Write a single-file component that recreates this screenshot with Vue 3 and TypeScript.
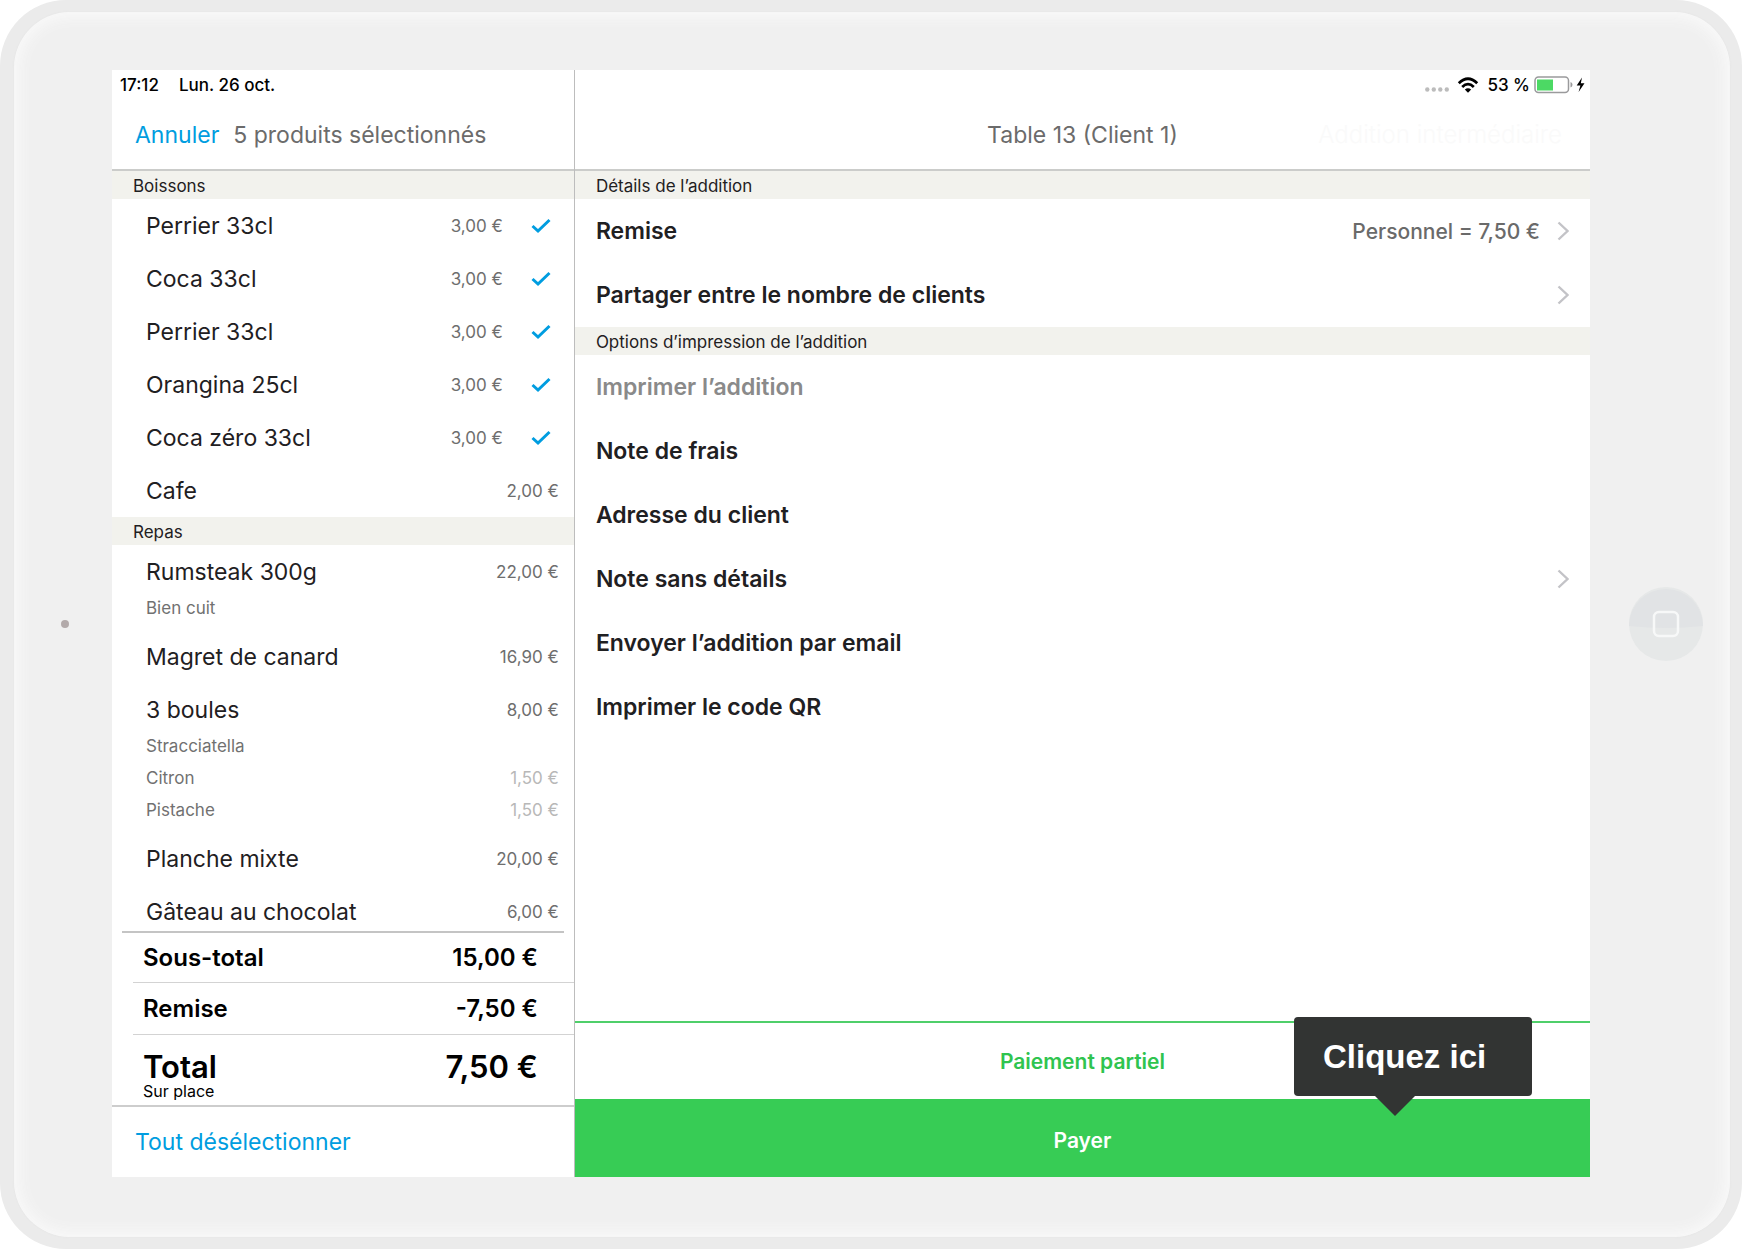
<script setup lang="ts">
import { ref } from 'vue'

interface Extra { name: string; price?: string }
interface Product { name: string; price: string; selected?: boolean; extras?: Extra[] }
interface Category { title: string; products: Product[] }
interface Action { label: string; value?: string; chevron?: boolean; disabled?: boolean }
interface ActionGroup { title: string; actions: Action[] }

const categories = ref<Category[]>([
  {
    title: 'Boissons',
    products: [
      { name: 'Perrier 33cl', price: '3,00 €', selected: true },
      { name: 'Coca 33cl', price: '3,00 €', selected: true },
      { name: 'Perrier 33cl', price: '3,00 €', selected: true },
      { name: 'Orangina 25cl', price: '3,00 €', selected: true },
      { name: 'Coca zéro 33cl', price: '3,00 €', selected: true },
      { name: 'Cafe', price: '2,00 €' },
    ],
  },
  {
    title: 'Repas',
    products: [
      { name: 'Rumsteak 300g', price: '22,00 €', extras: [{ name: 'Bien cuit' }] },
      { name: 'Magret de canard', price: '16,90 €' },
      {
        name: '3 boules',
        price: '8,00 €',
        extras: [
          { name: 'Stracciatella' },
          { name: 'Citron', price: '1,50 €' },
          { name: 'Pistache', price: '1,50 €' },
        ],
      },
      { name: 'Planche mixte', price: '20,00 €' },
      { name: 'Gâteau au chocolat', price: '6,00 €' },
    ],
  },
])

const groups: ActionGroup[] = [
  {
    title: 'Détails de l’addition',
    actions: [
      { label: 'Remise', value: 'Personnel = 7,50 €', chevron: true },
      { label: 'Partager entre le nombre de clients', chevron: true },
    ],
  },
  {
    title: 'Options d’impression de l’addition',
    actions: [
      { label: 'Imprimer l’addition', disabled: true },
      { label: 'Note de frais' },
      { label: 'Adresse du client' },
      { label: 'Note sans détails', chevron: true },
      { label: 'Envoyer l’addition par email' },
      { label: 'Imprimer le code QR' },
    ],
  },
]

function toggle(product: Product) {
  product.selected = !product.selected
}
</script>

<template>
  <div class="device">
    <div class="bezel">
      <div class="side side-left"><span class="camera"></span></div>

      <main class="screen">
        <section class="order">
          <header class="bar">
            <div class="status">
              <span>17:12</span>
              <span>Lun. 26 oct.</span>
            </div>
            <div class="nav nav-order">
              <button type="button" class="link">Annuler</button>
              <span>5 produits sélectionnés</span>
            </div>
          </header>

          <div class="products">
            <template v-for="category in categories" :key="category.title">
              <h2 class="section">{{ category.title }}</h2>
              <ul>
                <li v-for="(product, i) in category.products" :key="i">
                  <button type="button" class="product" :aria-pressed="!!product.selected" @click="toggle(product)">
                    <span class="name">{{ product.name }}</span>
                    <span class="price">{{ product.price }}</span>
                    <svg v-if="product.selected" class="check" viewBox="0 0 20 16" aria-hidden="true">
                      <path d="M1.500 8 L7 13 L18.500 2" />
                    </svg>
                  </button>
                  <ul v-if="product.extras" class="extras">
                    <li v-for="extra in product.extras" :key="extra.name" class="extra">
                      <span>{{ extra.name }}</span>
                      <span class="extra-price">{{ extra.price }}</span>
                    </li>
                  </ul>
                </li>
              </ul>
            </template>
          </div>

          <dl class="totals">
            <div class="sum"><dt>Sous-total</dt><dd>15,00 €</dd></div>
            <div class="sum discount"><dt>Remise</dt><dd>-7,50 €</dd></div>
            <div class="sum total">
              <dt>Total<small>Sur place</small></dt>
              <dd>7,50 €</dd>
            </div>
          </dl>

          <footer class="deselect">
            <button type="button" class="link">Tout désélectionner</button>
          </footer>
        </section>

        <section class="bill">
          <header class="bar">
            <div class="status status-right">
              <svg class="signal" viewBox="0 0 24 18" aria-hidden="true">
                <circle v-for="x in [2.3, 8.8, 15.3, 21.8]" :key="x" :cx="x" cy="13.500" r="2.200" />
              </svg>
              <svg class="wifi" viewBox="0 0 22 18" aria-hidden="true">
                <path class="arc" d="M1.800 7.300 Q11 -1.600 20.200 7.300" />
                <path class="arc" d="M5.200 10.900 Q11 5.400 16.800 10.900" />
                <path d="M11 16.700 L7.800 13.500 Q11 10.900 14.200 13.500 Z" />
              </svg>
              <span>53 %</span>
              <svg class="battery" viewBox="0 0 52 18" aria-hidden="true">
                <rect class="shell" x="1" y="1" width="33.500" height="15.500" rx="3.500" />
                <rect class="level" x="3" y="3.500" width="16" height="11" />
                <path class="nub" d="M36.500 6 Q38.500 6.500 38.500 8.700 Q38.500 11 36.500 11.500 Z" />
                <path d="M48 1.500 L42.700 9.500 L46.400 9.500 L44.600 16 L50.500 7.300 L46.800 7.300 Z" />
              </svg>
            </div>
            <div class="nav nav-bill">
              <h1>Table 13 (Client 1)</h1>
              <button type="button" class="interim" disabled>Addition intermédiaire</button>
            </div>
          </header>

          <div class="options">
            <template v-for="group in groups" :key="group.title">
              <h2 class="section">{{ group.title }}</h2>
              <button
                v-for="action in group.actions"
                :key="action.label"
                type="button"
                class="action"
                :disabled="action.disabled"
              >
                <span class="label">{{ action.label }}</span>
                <span v-if="action.value" class="value">{{ action.value }}</span>
                <svg v-if="action.chevron" class="chevron" viewBox="0 0 12 20" aria-hidden="true">
                  <path d="M1.500 1.500 L10.500 10 L1.500 18.500" />
                </svg>
              </button>
            </template>
          </div>

          <div class="pay">
            <button type="button" class="partial">Paiement partiel</button>
            <button type="button" class="full">Payer</button>
            <div class="hint" role="tooltip">Cliquez ici</div>
          </div>
        </section>
      </main>

      <div class="side side-right">
        <button type="button" class="home" aria-label="Accueil">
          <svg viewBox="0 0 74 74" aria-hidden="true">
            <circle cx="37" cy="37" r="37" fill="#e6e8e8" />
            <path d="M0 39 A37 37 0 1 1 74 39 Q37 43 0 39 Z" fill="#e1e3e5" />
            <rect x="25" y="25" width="24" height="24" rx="5" fill="none" stroke="#f7f8f8" stroke-width="2.500" />
          </svg>
        </button>
      </div>
    </div>
  </div>
</template>

<style>
body {
  margin: 0;
  background: #fff;
}
</style>

<style scoped>
.device {
  box-sizing: border-box;
  height: 100vh;
  padding: 12px 12px 12px 14px;
  border-radius: 66px;
  background: #ebebeb;
  color: #1f2022;
  font-family: Inter, "Liberation Sans", sans-serif;
  font-size: 23px;
}

.bezel {
  box-sizing: border-box;
  display: grid;
  grid-template-columns: 98px minmax(0, 1fr) 140px;
  grid-template-rows: minmax(0, 1fr);
  height: 100%;
  padding: 58px 0 60px;
  border-radius: 56px;
  background: #f0f0f0;
  box-shadow: 0 0 2px #e2e2e2, inset 0 0 14px 5px #f9f9f9;
}

.side {
  display: flex;
  align-items: center;
}

.side-left {
  padding-left: 47px;
}

.side-right {
  padding-left: 39px;
}

.camera {
  width: 8px;
  height: 8px;
  border-radius: 50%;
  background: #b3aaaa;
}

button {
  margin: 0;
  padding: 0;
  border: 0;
  background: none;
  color: inherit;
  font: inherit;
  text-align: left;
  cursor: pointer;
}

button:disabled {
  cursor: default;
}

.home,
.home svg {
  display: block;
  width: 74px;
  height: 74px;
}

.home {
  border-radius: 50%;
}

.screen {
  display: grid;
  grid-template-columns: minmax(0, 5fr) minmax(0, 11fr);
  grid-template-rows: minmax(0, 1fr);
  background: #fff;
}

.order,
.bill {
  display: flex;
  flex-direction: column;
  min-width: 0;
}

.bill {
  border-left: 1px solid #bdbdbd;
}

.bar {
  flex: none;
  border-bottom: 2px solid #cbccca;
}

.status {
  display: flex;
  align-items: center;
  gap: 20px;
  height: 30px;
  padding: 0 8px;
  color: #000;
  font-size: 17px;
  font-weight: 500;
}

.status-right {
  justify-content: flex-end;
  gap: 4px;
  padding-right: 4px;
}

.status svg {
  height: 18px;
}

.signal {
  width: 24px;
  margin-right: 4px;
  fill: #bcbcbc;
}

.wifi {
  width: 22px;
  margin-right: 4px;
}

.arc {
  fill: none;
  stroke: #000;
  stroke-width: 2.800;
}

.battery {
  width: 52px;
}

.shell {
  fill: none;
  stroke: #9a9a9c;
  stroke-width: 1.500;
}

.level {
  fill: #4cd964;
}

.nub {
  fill: #9a9a9c;
}

.nav {
  height: 69px;
  align-items: center;
  color: #6b6b6b;
}

.nav-order {
  display: flex;
  gap: 14px;
  padding-left: 23px;
}

.nav-bill {
  display: grid;
  grid-template-columns: 1fr auto 1fr;
  padding-right: 28px;
  padding-left: 28px;
}

h1 {
  grid-column: 2;
  margin: 0;
  font-size: 23px;
  font-weight: 400;
}

.interim {
  justify-self: end;
  color: #fafafa;
  font-size: 24px;
  font-weight: 300;
  white-space: nowrap;
}

.link {
  color: #009de0;
}

.section {
  height: 28px;
  margin: 0;
  padding: 0 21px;
  background: #f2f2ed;
  font-size: 17px;
  font-weight: 400;
  line-height: 30px;
}

.products {
  flex: 1;
  min-height: 0;
  overflow-y: auto;
  scrollbar-width: none;
}

ul {
  margin: 0;
  padding: 0;
  list-style: none;
}

.product {
  display: flex;
  align-items: center;
  width: 100%;
  height: 53px;
  padding: 0 15px 0 34px;
}

.name {
  flex: 1;
}

.price {
  color: #6e6e6e;
  font-size: 17px;
}

.check {
  width: 20px;
  height: 16px;
  margin: 0 8px 0 28px;
}

.check path {
  fill: none;
  stroke: #009de0;
  stroke-width: 3;
}

.extras {
  margin: -6px 0 6px;
}

.extra {
  display: flex;
  justify-content: space-between;
  height: 32px;
  padding: 0 15px 0 34px;
  color: #717171;
  font-size: 17px;
  line-height: 32px;
}

.extra-price {
  color: #b8b8b8;
}

.totals {
  flex: none;
  margin: 0;
  color: #000;
  font-size: 24px;
  font-weight: 600;
}

.totals::before {
  content: "";
  display: block;
  height: 2px;
  margin: 0 10px;
  background: #c4c4c4;
}

.sum {
  box-sizing: border-box;
  display: flex;
  align-items: center;
  justify-content: space-between;
  height: 50px;
  margin-left: 21px;
  padding: 0 36px 0 10px;
  border-bottom: 1px solid #d3d3d3;
}

.discount {
  height: 52px;
}

.total {
  align-items: flex-start;
  height: 70px;
  padding-top: 16px;
  border-bottom: 0;
  font-size: 31px;
  line-height: 32px;
}

dd {
  margin: 0;
}

small {
  display: block;
  font-size: 16px;
  font-weight: 400;
  line-height: 16px;
}

.deselect {
  display: flex;
  flex: none;
  align-items: center;
  height: 70px;
  padding-left: 23px;
  border-top: 2px solid #cdcdcd;
}

.options {
  flex: 1;
  min-height: 0;
}

.action {
  display: flex;
  gap: 17px;
  align-items: center;
  width: 100%;
  height: 64px;
  padding: 0 21px;
  font-weight: 600;
}

.action:disabled {
  color: #8a8a8a;
}

.label {
  flex: 1;
}

.value {
  color: #6a6a6a;
  font-size: 21px;
  font-weight: 500;
}

.chevron {
  width: 12px;
  height: 20px;
}

.chevron path {
  fill: none;
  stroke: #c3c3c7;
  stroke-width: 2.400;
}

.pay {
  position: relative;
  display: grid;
  flex: none;
  font-size: 21px;
  font-weight: 600;
}

.pay button {
  height: 78px;
  text-align: center;
}

.pay .partial {
  border-top: 2px solid #4fcf6a;
  color: #2fc44f;
}

.pay .full {
  padding-top: 4px;
  background: #37cc55;
  color: #fff;
}

.hint {
  position: absolute;
  top: -4px;
  right: 58px;
  box-sizing: border-box;
  width: 238px;
  padding: 0 29px;
  border-radius: 4px;
  background: #323433;
  color: #fff;
  font-family: "Liberation Sans", Arial, sans-serif;
  font-size: 33px;
  font-weight: 700;
  line-height: 79px;
}

.hint::after {
  content: "";
  position: absolute;
  top: 100%;
  left: 81px;
  border: 20px solid transparent;
  border-top-color: #323433;
  border-bottom: 0;
}
</style>
